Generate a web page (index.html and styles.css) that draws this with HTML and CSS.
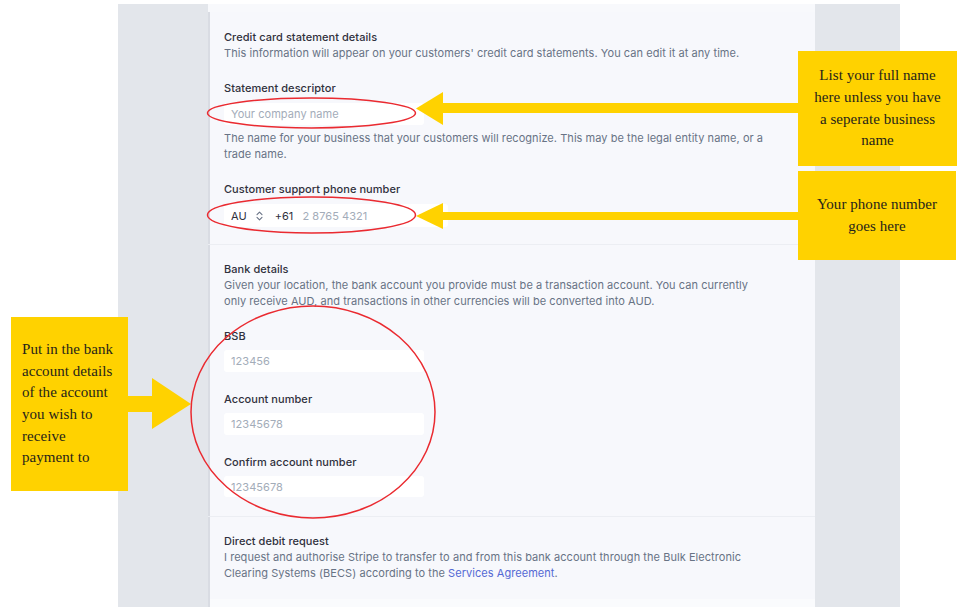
FILE: index.html
```html
<!DOCTYPE html>
<html lang="en">
<head>
  <title>Account settings - Public details</title>
  <link rel="stylesheet" href="styles.css">
</head>
<body>
  <div class="frame">
    <div class="panel">
      <div class="top-band"></div>

      <section class="block block-first">
        <h2>Credit card statement details</h2>
        <p class="desc">This information will appear on your customers' credit card statements. You can edit it at any time.</p>

        <label class="label">Statement descriptor</label>
        <div class="field"><span class="ph">Your company name</span></div>
        <p class="desc help">The name for your business that your customers will recognize. This may be the legal entity name, or a trade name.</p>

        <label class="label">Customer support phone number</label>
        <div class="field phone">
          <span class="val">AU</span>
          <svg class="updown" width="7" height="10" viewBox="0 0 7 10">
            <path d="M1 3.6 L3.5 1.2 L6 3.6 M1 6.4 L3.5 8.8 L6 6.4" fill="none" stroke="#697386" stroke-width="1.1" stroke-linecap="round" stroke-linejoin="round"/>
          </svg>
          <span class="val code">+61</span>
          <span class="ph">2 8765 4321</span>
        </div>
      </section>

      <section class="block block-bank">
        <h2>Bank details</h2>
        <p class="desc">Given your location, the bank account you provide must be a transaction account. You can currently only receive AUD, and transactions in other currencies will be converted into AUD.</p>

        <label class="label">BSB</label>
        <div class="field"><span class="ph">123456</span></div>

        <label class="label">Account number</label>
        <div class="field"><span class="ph">12345678</span></div>

        <label class="label">Confirm account number</label>
        <div class="field short"><span class="ph">12345678</span></div>
      </section>

      <section class="block block-debit">
        <h2>Direct debit request</h2>
        <p class="desc">I request and authorise Stripe to transfer to and from this bank account through the Bulk Electronic Clearing Systems (BECS) according to the <a href="#">Services Agreement</a>.</p>
      </section>

      <div class="bottom-band"></div>
    </div>
  </div>

  <!-- annotations drawn over the screenshot -->
  <div class="notes">
    <svg class="marks" width="961" height="613" viewBox="0 0 961 613">
      <rect x="440" y="103" width="360" height="10" fill="#ffd200"/>
      <polygon points="416,108.5 443,92 443,125" fill="#ffd200"/>
      <rect x="440" y="212" width="360" height="8" fill="#ffd200"/>
      <polygon points="416,216 443,203 443,229" fill="#ffd200"/>
      <rect x="126" y="396" width="28" height="16" fill="#ffd200"/>
      <polygon points="152,378 152,429 191,404" fill="#ffd200"/>

      <ellipse cx="311.5" cy="113" rx="104" ry="15" fill="none" stroke="#ea2a30" stroke-width="1.5"/>
      <ellipse cx="311.5" cy="215" rx="104" ry="18" fill="none" stroke="#ea2a30" stroke-width="1.5"/>
      <ellipse cx="313" cy="412" rx="122" ry="106" fill="none" stroke="#ea2a30" stroke-width="1.5"/>
    </svg>

    <div class="callout callout-name">List your full name<br>here unless you have<br>a seperate business<br>name</div>
    <div class="callout callout-phone">Your phone number<br>goes here</div>
    <div class="callout callout-bank">Put in the bank<br>account details<br>of the account<br>you wish to<br>receive<br>payment to</div>
  </div>
</body>
</html>
```

FILE: styles.css
```css
body {
  margin: 0;
  background: #ffffff;
  font-family: Inter, 'Noto Sans', sans-serif;
  font-size: 11px;
  line-height: 16px;
  letter-spacing: 0.05px;
  color: #687385;
}
.frame {
  margin: 4px 0 0 118px;
  width: 782px;
  height: 603px;
  background: #e3e6eb;
  padding-left: 90px;
  box-sizing: border-box;
  display: flex;
}
.panel {
  width: 607px;
  background: #f7f8fc;
  box-shadow: inset 2px 0 0 #d9dce3;
  display: flex;
  flex-direction: column;
}
.top-band {
  height: 8px;
  background: #f8f9fc;
}
.block {
  padding: 17px 16px 17px 16px;
  border-bottom: 1px solid #eceef3;
}
.block-bank {
  padding-top: 16px;
  padding-bottom: 19px;
}
.block-debit {
  padding-top: 16px;
  padding-bottom: 10px;
  border-bottom: none;
  flex: 1;
}
.bottom-band {
  height: 8px;
  background: #fafbfd;
  box-shadow: inset 2px 0 0 #d9dce3;
}
h2 {
  margin: 0;
  font-size: 11px;
  font-weight: 500;
  color: #30313d;
  line-height: 16px;
}
.desc {
  margin: 0;
  max-width: 545px;
}
.block-bank .desc {
  max-width: 530px;
}
.help {
  margin-top: 5px;
  max-width: 548px;
}
.label {
  display: block;
  margin-top: 19px;
  margin-bottom: 7px;
  font-weight: 500;
  color: #30313d;
}
.block-bank .label {
  margin-bottom: 6px;
}
.field {
  width: 200px;
  height: 22px;
  background: #ffffff;
  border-radius: 3px;
  display: flex;
  align-items: center;
  padding-left: 7px;
  box-sizing: border-box;
}
.field.short {
  height: 21px;
}
.field.phone {
  width: 224px;
  height: 23px;
}
.ph {
  color: #a3acb9;
}
.val {
  color: #30313d;
}
.updown {
  margin-left: 9px;
}
.code {
  margin-left: 12px;
  margin-right: 9px;
}
a {
  color: #5469d4;
  text-decoration: none;
}

/* annotation layer */
.notes {
  position: absolute;
  left: 0;
  top: 0;
  width: 961px;
  height: 613px;
  pointer-events: none;
}
.marks {
  position: absolute;
  left: 0;
  top: 0;
}
.callout {
  position: absolute;
  background: #ffd200;
  font-family: 'Liberation Serif', 'Times New Roman', serif;
  font-size: 15px;
  line-height: 21.7px;
  color: #26241a;
  display: flex;
  align-items: center;
  box-sizing: border-box;
}
.callout-name {
  left: 798px;
  top: 51px;
  width: 159px;
  height: 115px;
  justify-content: center;
  text-align: center;
}
.callout-phone {
  left: 798px;
  top: 171px;
  width: 158px;
  height: 89px;
  justify-content: center;
  text-align: center;
}
.callout-bank {
  left: 11px;
  top: 317px;
  width: 117px;
  height: 174px;
  padding-left: 11px;
}
```
